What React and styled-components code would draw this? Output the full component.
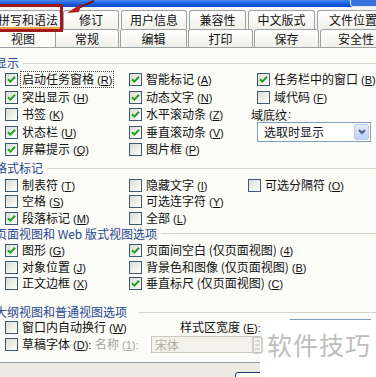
import React from "react";
import styled, { createGlobalStyle } from "styled-components";

const GlobalStyle = createGlobalStyle`
  html, body {
    margin: 0;
    padding: 0;
    background: #ebe9e1;
  }
  body {
    font-family: "Noto Sans CJK SC", "Liberation Sans", sans-serif;
    font-size: 12px;
    color: #111;
  }
`;

const Window = styled.div`
  position: relative;
  width: 376px;
  height: 377px;
  overflow: hidden;
  background: #ebe9e1;
`;

const TitleBar = styled.div`
  position: relative;
  height: 7px;
  background: linear-gradient(180deg, #4a86ec 0%, #1459dc 60%, #0b4ac4 100%);
`;

const TitleButton = styled.div`
  position: absolute;
  right: -6px;
  top: -7px;
  width: 30px;
  height: 12px;
  border: 1px solid #e8eefc;
  border-radius: 3px;
  background: #3a72e2;
`;

const TabBand = styled.div`
  display: flex;
  flex-direction: column;
  padding-top: 3px;
  background: #f7f6f2;
`;

const TabRow = styled.div`
  display: flex;
  gap: ${(p) => p.$gap}px;
  height: ${(p) => p.$h}px;
`;

const Tab = styled.div`
  flex-shrink: 0;
  width: ${(p) => p.$w}px;
  margin-left: ${(p) => p.$ml || 0}px;
  box-sizing: border-box;
  display: flex;
  align-items: center;
  justify-content: center;
  line-height: 1;
  white-space: nowrap;
  border: 1px solid ${(p) => (p.$active ? "transparent" : "#9aa2a3")};
  border-bottom: none;
  border-radius: 3px 3px 0 0;
  background: ${(p) =>
    p.$active ? "#fbfbf8" : "linear-gradient(180deg, #ffffff 0%, #f1f0ea 100%)"};
`;

const Page = styled.div`
  box-sizing: border-box;
  height: 316px;
  padding-top: 8px;
  background: #fbfbf8;
  border-top: 1px solid #9aa2a3;
  border-bottom: 1px solid #9aa2a3;
`;

const Section = styled.div`
  margin-top: ${(p) => p.$mt || 0}px;
`;

const Header = styled.div`
  display: flex;
  align-items: center;
  gap: ${(p) => p.$gap || 4}px;
  height: 14px;
  margin-left: -5px;
  color: #27478f;
  line-height: 1;
  white-space: nowrap;

  &::after {
    content: "";
    flex: 1;
    height: 1px;
    background: #d6d3c6;
  }
`;

const Grid = styled.div`
  display: grid;
  grid-template-columns: ${(p) => p.$cols};
  grid-auto-rows: ${(p) => p.$rh}px;
  margin-top: ${(p) => p.$mt || 0}px;
  padding-left: 5px;
`;

const Row = styled.div`
  display: flex;
  align-items: center;
  height: 17px;
  padding-left: 5px;
`;

const CheckItem = styled.label`
  display: flex;
  align-items: center;
  gap: 4px;
  white-space: nowrap;
  line-height: 1;
  width: ${(p) => (p.$w ? `${p.$w}px` : "auto")};
  flex-shrink: 0;
`;

const Box = styled.span`
  flex-shrink: 0;
  width: 13px;
  height: 13px;
  box-sizing: border-box;
  border: 1px solid #3f5872;
  background: linear-gradient(135deg, #dcdcd5 0%, #f4f4f0 70%, #ffffff 100%);
  display: flex;
  align-items: center;
  justify-content: center;
`;

const Text = styled.span`
  padding: 1px 1px;
  border: 1px dotted ${(p) => (p.$focus ? "#444" : "transparent")};
  margin: -2px -2px;
  color: ${(p) => (p.$muted ? "#a9a799" : "inherit")};
`;

const Acc = styled.span`
  margin-left: 3px;
  font-family: "Liberation Sans", sans-serif;
  font-size: 11px;

  u {
    text-decoration: underline;
    text-underline-offset: 1px;
  }
`;

const FieldLabel = styled.div`
  display: flex;
  align-items: center;
  margin-left: -6px;
  line-height: 1;
`;

const Select = styled.div`
  align-self: center;
  display: flex;
  align-items: center;
  justify-content: space-between;
  box-sizing: border-box;
  width: 114px;
  height: 20px;
  padding-left: 6px;
  border: 1px solid #7f9db9;
  background: #fff;
  line-height: 1;
`;

const DropButton = styled.span`
  display: flex;
  align-items: center;
  justify-content: center;
  width: 15px;
  height: 16px;
  margin-right: 1px;
  box-sizing: border-box;
  border: 1px solid #b9cbf1;
  border-radius: 2px;
  background: linear-gradient(180deg, #e3ebfd 0%, #bcd0f9 100%);
`;

const PlainLabel = styled.span`
  flex-shrink: 0;
  width: ${(p) => p.$w}px;
  white-space: nowrap;
  line-height: 1;
  color: ${(p) => (p.$muted ? "#a9a799" : "inherit")};
`;

const SpinBox = styled.div`
  box-sizing: border-box;
  width: 81px;
  height: 18px;
  border: 1px solid #7f9db9;
  background: #fff;
`;

const Combo = styled.div`
  box-sizing: border-box;
  display: flex;
  align-items: center;
  width: 114px;
  height: 17px;
  padding-left: 3px;
  border: 1px solid #cbc8ba;
  background: #f3f2ea;
  color: #b0ae9f;
  line-height: 1;
`;

const Footer = styled.div`
  padding: 9px 0 0 235px;
`;

const OkButton = styled.div`
  width: 75px;
  height: 23px;
  box-sizing: border-box;
  border: 1px solid #1e3d6e;
  border-radius: 3px;
  background: linear-gradient(180deg, #ffffff, #ecebe4);
`;

const Callout = styled.div`
  position: absolute;
  left: -3px;
  top: 4px;
  width: 66px;
  height: 28px;
  box-sizing: border-box;
  border: 3px solid #a3191b;
  box-shadow: inset 0 -2px 0 #eaa24c;
`;

const Arrow = styled.svg`
  position: absolute;
  left: 64px;
  top: 0;
`;

const Watermark = styled.div`
  position: absolute;
  left: 260px;
  top: 320px;
  width: 116px;
  height: 57px;
  background: #fff;
  display: flex;
  align-items: center;
  padding-bottom: 8px;
  box-sizing: border-box;
`;

const MarkIcon = styled.svg`
  margin-left: -8px;
  flex-shrink: 0;
`;

const MarkText = styled.span`
  margin-left: 4px;
  font-size: 25px;
  line-height: 1;
  letter-spacing: 1px;
  color: #bdbdbd;
  white-space: nowrap;
`;

const CheckMark = () => (
  <svg width="9" height="9" viewBox="0 0 9 9">
    <path d="M1 4.2 L3.4 6.6 L8 1.8" fill="none" stroke="#22a022" strokeWidth="2" />
  </svg>
);

const Check = ({ label, k, on, focus, w }) => (
  <CheckItem $w={w}>
    <Box>{on && <CheckMark />}</Box>
    <Text $focus={focus}>
      {label}
      <Acc>
        (<u>{k}</u>)
      </Acc>
    </Text>
  </CheckItem>
);

const tabsTop = [
  ["拼写和语法", 66, -5],
  ["修订", 56],
  ["用户信息", 66],
  ["兼容性", 57],
  ["中文版式", 67],
  ["文件位置", 72],
];

const tabsBottom = [
  ["视图", 62, -8, true],
  ["常规", 64],
  ["编辑", 67],
  ["打印", 65],
  ["保存", 65],
  ["安全性", 72],
];

export default function App() {
  return (
    <>
      <GlobalStyle />
      <Window>
        <TitleBar>
          <TitleButton />
        </TitleBar>
        <TabBand>
          <TabRow $gap={2} $h={19}>
            {tabsTop.map(([t, w, ml]) => (
              <Tab key={t} $w={w} $ml={ml}>
                {t}
              </Tab>
            ))}
          </TabRow>
          <TabRow $gap={1} $h={18}>
            {tabsBottom.map(([t, w, ml, active]) => (
              <Tab key={t} $w={w} $ml={ml} $active={active}>
                {t}
              </Tab>
            ))}
          </TabRow>
        </TabBand>

        <Page>
          <Section>
            <Header>显示</Header>
            <Grid $cols="124px 128px 1fr" $rh={17.5} $mt={1}>
              <Check label="启动任务窗格" k="R" on focus />
              <Check label="智能标记" k="A" on />
              <Check label="任务栏中的窗口" k="B" on />
              <Check label="突出显示" k="H" on />
              <Check label="动态文字" k="N" on />
              <Check label="域代码" k="F" />
              <Check label="书签" k="K" />
              <Check label="水平滚动条" k="Z" on />
              <FieldLabel>
                域底纹<Acc style={{ marginLeft: 1 }}>:</Acc>
              </FieldLabel>
              <Check label="状态栏" k="U" on />
              <Check label="垂直滚动条" k="V" on />
              <Select>
                选取时显示
                <DropButton>
                  <svg width="8" height="6" viewBox="0 0 8 6">
                    <path d="M1 1 L4 4 L7 1" fill="none" stroke="#4d6185" strokeWidth="2" />
                  </svg>
                </DropButton>
              </Select>
              <Check label="屏幕提示" k="Q" on />
              <Check label="图片框" k="P" />
            </Grid>
          </Section>

          <Section $mt={2.5}>
            <Header>格式标记</Header>
            <Grid $cols="124px 119px 1fr" $rh={16.5} $mt={2}>
              <Check label="制表符" k="T" />
              <Check label="隐藏文字" k="I" />
              <Check label="可选分隔符" k="O" />
              <Check label="空格" k="S" />
              <Check label="可选连字符" k="Y" />
              <span />
              <Check label="段落标记" k="M" on />
              <Check label="全部" k="L" />
            </Grid>
          </Section>

          <Section>
            <Header>页面视图和 Web 版式视图选项</Header>
            <Grid $cols="124px 1fr" $rh={16.5} $mt={2}>
              <Check label="图形" k="G" on />
              <Check label="页面间空白 (仅页面视图)" k="4" on />
              <Check label="对象位置" k="J" />
              <Check label="背景色和图像 (仅页面视图)" k="B" />
              <Check label="正文边框" k="X" />
              <Check label="垂直标尺 (仅页面视图)" k="C" on />
            </Grid>
          </Section>

          <Section $mt={13}>
            <Header $gap={12}>大纲视图和普通视图选项</Header>
            <Row>
              <Check label="窗口内自动换行" k="W" w={175} />
              <PlainLabel $w={110}>
                样式区宽度<Acc>
                  (<u>E</u>):
                </Acc>
              </PlainLabel>
              <SpinBox />
            </Row>
            <Row>
              <CheckItem $w={90}>
                <Box />
                <Text>
                  草稿字体<Acc>
                    (<u>D</u>):
                  </Acc>
                </Text>
              </CheckItem>
              <PlainLabel $w={56} $muted>
                名称<Acc>
                  (<u>1</u>):
                </Acc>
              </PlainLabel>
              <Combo>宋体</Combo>
            </Row>
          </Section>
        </Page>

        <Footer>
          <OkButton />
        </Footer>

        <Callout />
        <Arrow width="32" height="16" viewBox="0 0 32 16">
          <line x1="14" y1="8" x2="30" y2="1" stroke="#7a1a1a" strokeWidth="2" />
          <polygon points="3,13 17,4 15,12" fill="#b8191b" />
        </Arrow>

        <Watermark>
          <MarkIcon width="11" height="18" viewBox="0 0 11 18">
            <rect x="1" y="1" width="9" height="16" rx="2" fill="none" stroke="#c4c4c4" strokeWidth="1.5" />
            <path d="M3 5 H8 M3 9 H8 M3 13 H8" stroke="#c4c4c4" strokeWidth="1.2" />
          </MarkIcon>
          <MarkText>软件技巧</MarkText>
        </Watermark>
      </Window>
    </>
  );
}
